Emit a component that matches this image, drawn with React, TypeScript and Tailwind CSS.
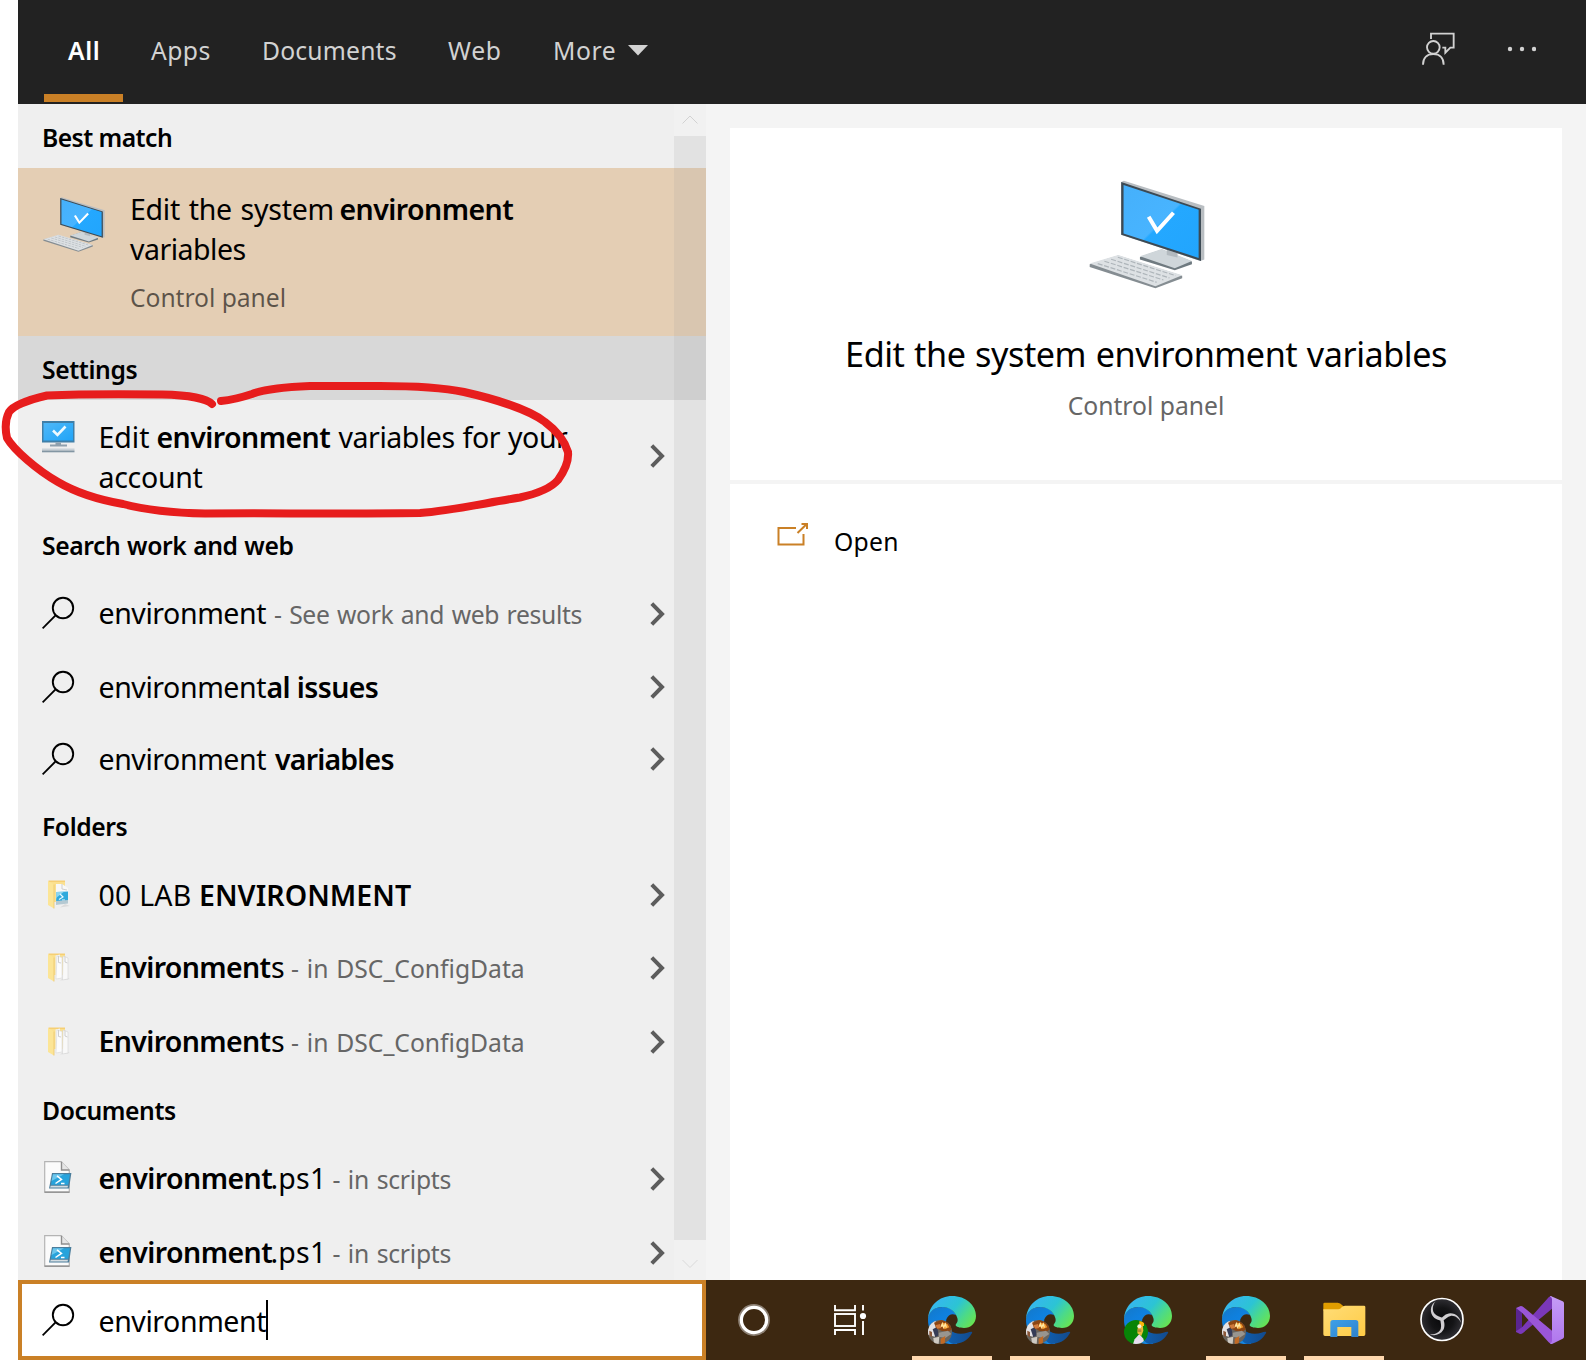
import React from 'react';

type SvgProps = { className?: string };

function SearchIcon({ className = '' }: SvgProps) {
  return (
    <svg className={className} width="34" height="34" viewBox="0 0 34 34" fill="none" stroke="#000" strokeWidth="1.9">
      <circle cx="21" cy="12" r="10.2" />
      <path d="M13.8 19.2L.6 32.4" />
    </svg>
  );
}

function Chevron() {
  return (
    <svg width="15" height="24" viewBox="0 0 15 24" fill="none" stroke="#5c5c5c" strokeWidth="4">
      <path d="M1.8 1.6L12 12L1.8 22.4" />
    </svg>
  );
}

function ComputerIcon({ className = '', id }: { className?: string; id: string }) {
  return (
    <svg className={className} viewBox="118 60 346 326" preserveAspectRatio="none">
      <defs>
        <linearGradient id={id} x1="0" y1="0" x2="1" y2="1">
          <stop offset="0" stopColor="#45b0fb" />
          <stop offset=".5" stopColor="#48b4ff" />
          <stop offset=".52" stopColor="#24a8ff" />
          <stop offset="1" stopColor="#22a5fd" />
        </linearGradient>
      </defs>
      <path d="M270 290L335 268L425 304V312L374 330L270 298Z" fill="#6f7a80" />
      <path d="M270 288L335 266L425 302L374 324Z" fill="#cfd6da" />
      <path d="M350 268L382 278V292L350 284Z" fill="#b3babf" />
      <path d="M214 66L222 62L462 138V298L450 302L214 224Z" fill="#b9bec2" />
      <path d="M214 66L452 146V302L214 224Z" fill="#3c4a54" />
      <path d="M221 75L445 149V293L221 220Z" fill={`url(#${id})`} />
      <path d="M296 170L321 212L370 158" fill="none" stroke="#fff" strokeWidth="12" />
      <path d="M120 312L205 286L396 346V354L316 384L120 320Z" fill="#858d92" />
      <path d="M120 310L205 284L396 345L316 378Z" fill="#dde1e4" />
      <g stroke="#aeb5ba" strokeWidth="3.5" strokeDasharray="15 5" fill="none">
        <path d="M144 310L320 366" />
        <path d="M164 303L340 359" />
        <path d="M184 297L358 353" />
        <path d="M204 291L376 346" />
      </g>
    </svg>
  );
}

function MonitorIcon() {
  return (
    <svg width="33" height="32" viewBox="0 0 33 32">
      <defs>
        <linearGradient id="mon" x1="0" y1="0" x2="1" y2="1">
          <stop offset="0" stopColor="#4fb8f8" />
          <stop offset="1" stopColor="#20a4f8" />
        </linearGradient>
      </defs>
      <rect x="0" y="0" width="32.5" height="21.5" fill="#3f7fa8" />
      <rect x="1.5" y="2" width="29.5" height="17.5" fill="url(#mon)" />
      <path d="M11 9.5L15.5 14L23.5 5.5" fill="none" stroke="#eefaff" strokeWidth="2.6" />
      <path d="M13.5 21.5h5.5v2h6v2H8v-2h5.5z" fill="#8fa0ad" />
      <rect x="0" y="27.5" width="32.5" height="2" fill="#c9d1d7" />
      <rect x="0" y="29.5" width="32.5" height="1.8" fill="#8396a3" />
    </svg>
  );
}

function ScriptIcon() {
  return (
    <svg width="28" height="32" viewBox="0 0 28 32">
      <path d="M.7 .7H17L25.3 9V31H.7Z" fill="#fbfbfb" stroke="#b4b4b4" strokeWidth="1.2" />
      <path d="M17.5 .7V9H25.3" fill="#e6e6e6" stroke="#8e8e8e" strokeWidth="1.4" />
      <path d="M.5 31.2H25.5" stroke="#8f8f8f" strokeWidth="1.4" />
      <path d="M8 12H27.4L25 27.500H5Z" fill="#4b7d9b" />
      <path d="M9 13.2H26L24.2 23.800H7Z" fill="#27a3dc" />
      <path d="M9 13.2H20L7.600 20Z" fill="#6cc6ec" />
      <path d="M13 14.800L17.500 18.400L11.500 22.500M17 22.500H20.500" fill="none" stroke="#fff" strokeWidth="1.500" />
      <path d="M6.800 24.800H24L23.600 26.600H6Z" fill="#d5dde2" />
    </svg>
  );
}

function FolderIcon({ script }: { script?: boolean }) {
  return (
    <svg width="23" height="29" viewBox="0 0 23 29">
      <path d="M.5 .5H17V22H.5Z" fill="#f6cf74" />
      <path d="M.5 2H17V22H.5Z" fill="#fbe08f" />
      <path d="M17 24L22 26L12 27.5Z" fill="#dcdcdc" />
      {script ? (
        <>
          <path d="M8 4H14L20 8V23L8 25.5Z" fill="#f8f8f8" />
          <path d="M14 4V9L19 10" fill="none" stroke="#cfcfcf" />
          <path d="M8.500 12L20 11.500V22.500L8 23.500Z" fill="#2fa9dc" />
          <path d="M8.500 12L16 11.800L8 18Z" fill="#8bd5f0" />
          <path d="M12 14L15 17L11 19.500M14 20H17" fill="none" stroke="#e8f8ff" strokeWidth="1.200" />
          <path d="M8 21L20 20V23.500L8 25Z" fill="#b5c9d2" />
        </>
      ) : (
        <>
          <path d="M7.500 2.500L12 1.500V24L7.500 25Z" fill="#f1f1f1" />
          <path d="M9 3L14 4.500V25L8 26Z" fill="#fcfcfc" stroke="#d9d9d9" strokeWidth=".6" />
          <path d="M15 3L20 5V26L14.500 27Z" fill="#f9f9f9" stroke="#d4d4d4" strokeWidth=".6" />
          <path d="M10.500 3V9.500L13 10M17 3.500V9L19.500 10" fill="none" stroke="#cfcfcf" />
        </>
      )}
      <path d="M0 1L6 4.500V28.500L0 25Z" fill="#fce596" />
      <path d="M6 4.500V28.500" stroke="#ecc66c" strokeWidth=".8" />
    </svg>
  );
}

function FeedbackIcon() {
  return (
    <svg width="34" height="34" viewBox="0 0 102 102" fill="none" stroke="#d2d2d2" strokeWidth="5.6">
      <path d="M27 21V5H95V47H85L70 62V47H61" />
      <circle cx="34" cy="46" r="19" />
      <path d="M3 98C3 77 16 66 34 66S65 77 65 98" />
    </svg>
  );
}

function OpenIcon() {
  return (
    <svg width="32" height="24" viewBox="0 0 32 24" fill="none" stroke="#ca8026" strokeWidth="2">
      <path d="M19 5H1.500V21.500H26.500V11" />
      <path d="M20.500 10L29.500 1.200M24.500 1H30V6" />
    </svg>
  );
}

function EdgeIcon({ id, green }: { id: string; green?: boolean }) {
  return (
    <svg className="shrink-0" width="48" height="48" viewBox="0 0 144 144">
      <defs>
        <linearGradient id={`${id}a`} x1="0" y1=".2" x2="1" y2=".75">
          <stop offset="0" stopColor="#38b4f4" />
          <stop offset=".5" stopColor="#2cc4d4" />
          <stop offset=".75" stopColor="#4ad98c" />
          <stop offset="1" stopColor="#68e352" />
        </linearGradient>
        <linearGradient id={`${id}b`} x1="0" y1="0" x2=".6" y2="1">
          <stop offset="0" stopColor="#1478c8" />
          <stop offset=".4" stopColor="#0f80de" />
          <stop offset="1" stopColor="#1686e0" />
        </linearGradient>
        <linearGradient id={`${id}c`} x1="0" y1="0" x2="1" y2="0">
          <stop offset="0" stopColor="#0f62b4" />
          <stop offset="1" stopColor="#134a8c" />
        </linearGradient>
        <clipPath id={`${id}d`}>
          <circle cx="36" cy="108" r="36" />
        </clipPath>
      </defs>
      <path d="M0 72C0 46 20 33 44 33C66 33 80 46 84 58C74 51 60 56 55 70C50 90 64 120 88 144H72C30 144 0 112 0 72Z" fill={`url(#${id}b)`} />
      <path d="M54 74C52 96 72 113 98 113C114 113 124 107 130 107C134 107 133 110 130 114C120 134 98 144 76 144C52 136 40 100 54 74Z" fill={`url(#${id}c)`} />
      <path d="M0 70C2 28 34 0 72 0C114 0 144 28 144 60C144 82 128 96 108 96C94 96 84 92 83 88C82 83 92 80 88 66C82 46 64 33 42 33C18 33 2 48 0 70Z" fill={`url(#${id}a)`} />
      {green ? (
        <g clipPath={`url(#${id}d)`}>
          <rect y="72" width="72" height="72" fill="#078407" />
          <path d="M27 144L32 130L46 114L58 128L62 144Z" fill="#e9ddf0" />
          <path d="M42 88L56 84L58 104L52 120L40 112Z" fill="#e9b93a" />
          <path d="M46 76H60V90H46Z" fill="#fbb50c" />
          <circle cx="46" cy="91" r="6" fill="#f4f0dc" />
          <path d="M40 100H52V108H42Z" fill="#b48a38" />
        </g>
      ) : (
        <g clipPath={`url(#${id}d)`}>
          <rect y="72" width="72" height="72" fill="#6a655e" />
          <path d="M0 78L22 72L28 104L20 122L0 116Z" fill="#e4e2e4" />
          <path d="M14 100L28 92L32 118L22 124Z" fill="#353c56" />
          <path d="M18 80L40 72L64 72L72 100L60 108L40 104L24 96Z" fill="#8c4512" />
          <path d="M22 88L36 84L40 96L28 98Z" fill="#d07a3c" />
          <path d="M38 88L46 80L58 84L64 94L50 100Z" fill="#f19a2e" />
          <path d="M40 92L43 83L47 94L52 84L55 95" fill="none" stroke="#ffe6a0" strokeWidth="4" />
          <path d="M32 110L60 104L70 114L52 126L32 122Z" fill="#98958f" />
          <path d="M38 128L52 120L50 144H38Z" fill="#c26a24" />
          <path d="M16 126L34 122L32 144H18Z" fill="#cfcac2" />
          <path d="M4 104L12 108L12 124L4 118Z" fill="#8a5738" />
        </g>
      )}
    </svg>
  );
}

function CortanaIcon() {
  return (
    <svg width="32" height="32" viewBox="0 0 32 32" fill="none">
      <circle cx="16" cy="16" r="14.4" stroke="#8d8175" strokeWidth="3" />
      <circle cx="16" cy="16" r="12.6" stroke="#fff" strokeWidth="3.2" />
    </svg>
  );
}

function TaskViewIcon() {
  return (
    <svg width="33" height="30" viewBox="0 0 33 30" fill="none" stroke="#fff" strokeWidth="1.9">
      <path d="M1 0V5.200H21V0" />
      <rect x="1" y="9" width="20" height="12" />
      <path d="M1 30V25H21V30" />
      <path d="M29 0V5.500M29 16V30" />
      <circle cx="29" cy="11" r="3.1" fill="#fff" stroke="none" />
    </svg>
  );
}

function ExplorerIcon() {
  return (
    <svg className="shrink-0" width="43" height="35" viewBox="0 0 129 105">
      <defs>
        <linearGradient id="exf" x1="0" y1="0" x2="1" y2="1">
          <stop offset="0" stopColor="#ffdd78" />
          <stop offset="1" stopColor="#ffcb45" />
        </linearGradient>
        <linearGradient id="exb" x1="0" y1="0" x2="1" y2="1">
          <stop offset="0" stopColor="#3fa0e8" />
          <stop offset="1" stopColor="#2e82cc" />
        </linearGradient>
      </defs>
      <path d="M1 6Q1 2 5 2H44Q52 2 58 10L64 16L50 26H1Z" fill="#e09d00" />
      <path d="M1 22H46Q52 22 56 16Q60 11 66 11H123Q127 11 127 15V97Q127 102 122 102H6Q1 102 1 97Z" fill="url(#exf)" />
      <path d="M22 105V62Q22 54 30 54H98Q106 54 106 62V105H85V75H43V105Z" fill="url(#exb)" />
    </svg>
  );
}

const blade = 'M-20 -54C-29 -42 -30 -26 -22 -17C-15 -10 -7 -9 1 -5L3 4C-8 4 -22 -1 -29 -12C-38 -28 -32 -46 -20 -54Z';

function ObsIcon() {
  return (
    <svg width="44" height="45" viewBox="-66 -67 132 134">
      <defs>
        <radialGradient id="obs">
          <stop offset="0" stopColor="#08080a" />
          <stop offset=".55" stopColor="#141416" />
          <stop offset="1" stopColor="#302f34" />
        </radialGradient>
      </defs>
      <circle r="63" fill="url(#obs)" stroke="#fff" strokeWidth="5" />
      <g fill="#cfcdd0">
        <path d={blade} />
        <path d={blade} transform="rotate(120)" />
        <path d={blade} transform="rotate(240)" />
      </g>
    </svg>
  );
}

function VisualStudioIcon() {
  return (
    <svg width="48" height="48" viewBox="0 0 144 144">
      <defs>
        <linearGradient id="vsr" x1="0" y1="0" x2="0" y2="1">
          <stop offset="0" stopColor="#c59cf6" />
          <stop offset="1" stopColor="#b077ee" />
        </linearGradient>
      </defs>
      <path d="M0 36L18 44V100L0 109Z" fill="#5a2590" />
      <path d="M0 108L12 114Q18 114 22 110L108 38V2Q104 -1 98 4L18 94L0 106Z" fill="#7a38b8" />
      <path d="M0 36L14 30Q19 30 22 33L108 104V142Q104 145 98 139L18 50L0 36Z" fill="#9a56d8" />
      <path d="M104 0L140 16Q144 18 144 22V122Q144 126 140 128L108 144Q104 145 102 141Q108 141 108 134V10Q108 3 102 2Z" fill="url(#vsr)" />
    </svg>
  );
}

function Heading({ children, className }: { children: React.ReactNode; className: string }) {
  return (
    <div className={`flex shrink-0 items-center pl-[24px] text-[24.7px] font-semibold leading-[32px] ${className}`}>
      {children}
    </div>
  );
}

function Row({ icon, children, className }: { icon: React.ReactNode; children: React.ReactNode; className: string }) {
  return (
    <div className={`flex shrink-0 items-center pr-[41px] ${className}`}>
      <div className="flex w-[80.5px] shrink-0 pl-[24px]">{icon}</div>
      <div className="flex flex-1 items-baseline whitespace-pre text-[28.5px] leading-[40px]">{children}</div>
      <Chevron />
    </div>
  );
}

const sub = 'text-[24.7px] text-[#666] [word-spacing:1.5px]';

function Taskbar() {
  const slot = 'flex w-[98px] shrink-0 flex-col items-center';
  const bar = <div className="mt-auto h-[4px] w-[80px] shrink-0 bg-[#ffd8ae]" />;
  return (
    <div className="flex flex-1 overflow-hidden bg-[#3d2811]">
      <div className="flex w-[97px] shrink-0 items-center justify-center pr-[2px]">
        <CortanaIcon />
      </div>
      <div className="flex w-[100px] shrink-0 items-center pl-[31px]">
        <TaskViewIcon />
      </div>
      <div className={`${slot} pt-[16px]`}><EdgeIcon id="e1" />{bar}</div>
      <div className={`${slot} pt-[16px]`}><EdgeIcon id="e2" />{bar}</div>
      <div className={`${slot} pt-[16px]`}><EdgeIcon id="e3" green /></div>
      <div className={`${slot} pt-[16px]`}><EdgeIcon id="e4" />{bar}</div>
      <div className={`${slot} pt-[22px]`}><ExplorerIcon />{bar}</div>
      <div className={`${slot} pt-[17px]`}><ObsIcon /></div>
      <div className={`${slot} pt-[16px]`}><VisualStudioIcon /></div>
    </div>
  );
}

export default function App() {
  return (
    <div
      className="relative flex h-[1360px] w-[1586px] flex-col overflow-hidden bg-white pl-[18px] text-black"
      style={{ fontFamily: '"Noto Sans", "Open Sans", sans-serif' }}
    >
      <header className="flex h-[104px] shrink-0 bg-[#222] text-[24.7px] leading-[102px] text-[#d2d2d2]">
        <div className="relative ml-[26px] w-[79px] pl-[24px] font-semibold tracking-[0.6px] text-white">
          All
          <div className="absolute bottom-[2px] left-0 h-[8px] w-[79px] bg-[#ca8026]" />
        </div>
        <div className="ml-[28px] w-[109px] tracking-[0.45px]">Apps</div>
        <div className="ml-[2px] w-[186px] tracking-[0.18px]">Documents</div>
        <div className="w-[105px] tracking-[0.7px]">Web</div>
        <div className="flex h-[102px] items-center tracking-[0.6px]">
          More
          <svg className="-mt-[1px] ml-[12px]" width="20" height="11" viewBox="0 0 20 11">
            <path d="M0 0H20L10 10.500Z" fill="#d2d2d2" />
          </svg>
        </div>
        <div className="ml-auto flex pr-[50px] pt-[32px]">
          <FeedbackIcon />
          <svg className="ml-[50px] mt-[14px]" width="30" height="6" viewBox="0 0 30 6" fill="#d2d2d2">
            <circle cx="4" cy="3" r="2.2" />
            <circle cx="16" cy="3" r="2.2" />
            <circle cx="28" cy="3" r="2.2" />
          </svg>
        </div>
      </header>

      <main className="flex h-[1176px] shrink-0">
        <section className="relative flex w-[688px] shrink-0 flex-col overflow-hidden bg-[#efefef]">
          <Heading className="h-[64px] pt-[4px] tracking-[-0.55px]">Best match</Heading>
          <div className="flex h-[168px] shrink-0 bg-[#e4ceb4]">
            <ComputerIcon id="pcs" className="ml-[25px] mt-[29px] h-[55px] w-[62px] shrink-0" />
            <div className="ml-[25px] pt-[21px] text-[28.5px] leading-[40px]">
              <div className="flex whitespace-pre">
                <span className="w-[209.500px] tracking-[-0.25px] [word-spacing:1.5px]">Edit the system</span>
                <span className="font-semibold tracking-[-0.56px]">environment</span>
              </div>
              <div className="tracking-[-0.5px]">variables</div>
              <div className="mt-[9px] text-[24.7px] tracking-[-0.06px] text-black/60">Control panel</div>
            </div>
          </div>
          <Heading className="h-[64px] bg-[#d8d8d8] pt-[4px] tracking-[-0.39px]">Settings</Heading>
          <div className="flex h-[112px] shrink-0 items-center pr-[41px]">
            <div className="w-[80.500px] shrink-0 self-start pl-[24px] pt-[21px]"><MonitorIcon /></div>
            <div className="flex-1 whitespace-pre pt-[1px] text-[28.5px] leading-[40px]">
              <div className="flex">
                <span className="w-[58px]">Edit</span>
                <span className="w-[182px] font-semibold tracking-[-0.56px]">environment</span>
                <span className="tracking-[-0.45px] [word-spacing:1px]">variables for your</span>
              </div>
              <div className="tracking-[-0.3px]">account</div>
            </div>
            <Chevron />
          </div>

          <Heading className="h-[64px] pt-[4px] tracking-[-0.42px] [word-spacing:0.8px]">Search work and web</Heading>
          <Row className="h-[74px] pt-[1px]" icon={<SearchIcon className="-mt-[1px]" />}>
            <span className="w-[175.500px] tracking-[-0.42px]">environment</span>
            <span className={`${sub} tracking-[-0.36px]`}>- See work and web results</span>
          </Row>
          <Row className="h-[73px]" icon={<SearchIcon />}>
            <span className="w-[168px] tracking-[-0.42px]">environment</span>
            <span className="font-semibold tracking-[-0.61px]">al issues</span>
          </Row>
          <Row className="h-[71px]" icon={<SearchIcon />}>
            <span className="w-[176.500px] tracking-[-0.42px]">environment</span>
            <span className="font-semibold tracking-[-0.81px]">variables</span>
          </Row>

          <Heading className="h-[64px] pt-[1px] tracking-[-0.44px]">Folders</Heading>
          <Row className="h-[73px]" icon={<div className="pl-[6px]"><FolderIcon script /></div>}>
            <span className="w-[100.500px] tracking-[0.23px]">00 LAB</span>
            <span className="font-semibold tracking-[0.06px]">ENVIRONMENT</span>
          </Row>
          <Row className="h-[73px]" icon={<div className="pl-[6px]"><FolderIcon /></div>}>
            <span className="w-[172.500px] font-semibold tracking-[-0.65px]">Environment</span>
            <span className="w-[20px] tracking-normal">s</span>
            <span className={`${sub} tracking-[-0.02px]`}>- in DSC_ConfigData</span>
          </Row>
          <Row className="h-[74px] pt-[1px]" icon={<div className="pl-[6px]"><FolderIcon /></div>}>
            <span className="w-[172.500px] font-semibold tracking-[-0.65px]">Environment</span>
            <span className="w-[20px] tracking-normal">s</span>
            <span className={`${sub} tracking-[-0.02px]`}>- in DSC_ConfigData</span>
          </Row>

          <Heading className="h-[64px] pt-[1px] tracking-[-0.42px]">Documents</Heading>
          <Row className="h-[73px]" icon={<div className="-mt-[3px] pl-[2px]"><ScriptIcon /></div>}>
            <span className="w-[172px] font-semibold tracking-[-0.56px]">environment</span>
            <span className="w-[62px] tracking-[0.2px]">.ps1</span>
            <span className={`${sub} tracking-[-0.25px]`}>- in scripts</span>
          </Row>
          <Row className="h-[75px]" icon={<div className="-mt-[3px] pl-[2px]"><ScriptIcon /></div>}>
            <span className="w-[172px] font-semibold tracking-[-0.56px]">environment</span>
            <span className="w-[62px] tracking-[0.2px]">.ps1</span>
            <span className={`${sub} tracking-[-0.25px]`}>- in scripts</span>
          </Row>

          <div className="absolute inset-y-0 right-0 flex w-[32px] flex-col items-center bg-white/10">
            <svg className="mt-[11px] shrink-0" width="16" height="10" viewBox="0 0 16 10" fill="none" stroke="#d2d2d2">
              <path d="M.5 8.500L8 1L15.500 8.500" />
            </svg>
            <div className="mt-[11px] h-[1104px] w-full shrink-0 bg-black/[0.06]" />
            <svg className="mt-[19px] shrink-0" width="16" height="10" viewBox="0 0 16 10" fill="none" stroke="#d9d9d9">
              <path d="M.5 1L8 8.500L15.500 1" />
            </svg>
          </div>
        </section>

        <section className="flex flex-1 flex-col bg-[#f4f4f4] px-[24px] pt-[24px]">
          <div className="flex h-[352px] shrink-0 flex-col items-center bg-white pt-[52px]">
            <ComputerIcon id="pcl" className="ml-[2px] h-[109px] w-[116px]" />
            <div className="mt-[43px] text-[34.2px] leading-[44px] tracking-[-0.46px] [word-spacing:1.2px]">Edit the system environment variables</div>
            <div className="mt-[12px] text-[24.7px] leading-[36px] text-[#666]">Control panel</div>
          </div>
          <div className="mt-[4px] flex flex-1 items-start bg-white pl-[47px] pt-[39px]">
            <OpenIcon />
            <div className="ml-[25px] text-[24.7px] leading-[38px] tracking-[0.25px]">Open</div>
          </div>
        </section>
      </main>

      <footer className="flex h-[80px] shrink-0">
        <div className="flex w-[688px] shrink-0 items-center border-4 border-[#ca8026] bg-white pl-[20px]">
          <SearchIcon />
          <div className="ml-[22.500px] flex items-center text-[28.5px] leading-[40px] tracking-[-0.42px]">
            <span className="w-[167.500px] pt-[1px]">environment</span>
            <div className="h-[40px] w-[2px] bg-black" />
          </div>
        </div>
        <Taskbar />
      </footer>

      <svg className="pointer-events-none absolute left-0 top-[370px]" width="590" height="160" viewBox="0 370 590 160" fill="none" stroke="#e71d1d" strokeWidth="8" strokeLinecap="round" strokeLinejoin="round">
        <path d="M212 404C207 399 189 395 162 394.500C120 394 80 394 47 395.500C32 399 14 405 9 412C5 420 5 429 7 438C14 450 37 470 58 482C75 492 100 500 123 504C150 511 180 513 205 513.500C270 513 340 514 420 513C450 511 485 503 520 497.500C540 493 552 487 558 480C563 473 569 462 568 452C565 442 557 431 545 422C530 410 495 399 464 392C440 387 415 386 380 386H310C285 387 265 389 252 394C243 397 232 400 221 401" />
      </svg>
    </div>
  );
}
